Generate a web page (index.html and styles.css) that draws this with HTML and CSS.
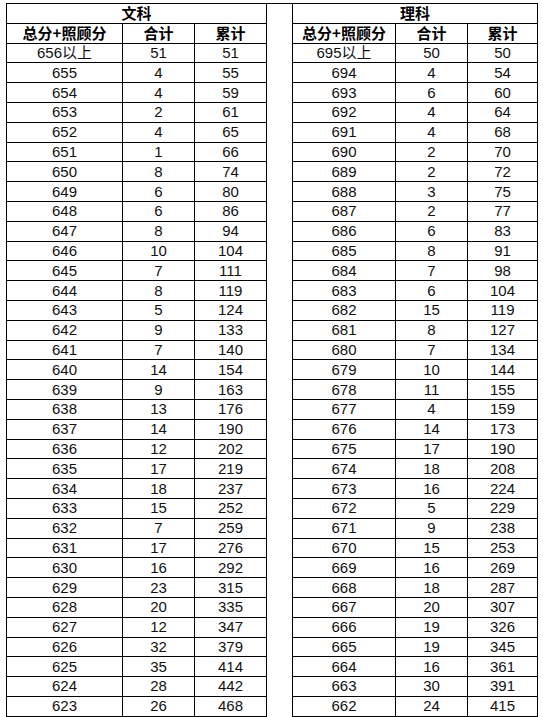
FILE: index.html
```html
<!DOCTYPE html>
<html lang="zh">
<head>
<meta charset="utf-8">
<title>分数段统计</title>
<link rel="stylesheet" href="styles.css">
</head>
<body>
<table class="score">
<colgroup>
<col class="c-score-l"><col class="c-num"><col class="c-num">
<col class="c-gap">
<col class="c-score-r"><col class="c-num"><col class="c-num-r">
</colgroup>
<tbody>
<tr class="head"><th colspan="3">文科</th><td class="gap" rowspan="37"></td><th colspan="3">理科</th></tr>
<tr class="head"><th>总分+照顾分</th><th>合计</th><th>累计</th><th>总分+照顾分</th><th>合计</th><th>累计</th></tr>
<tr><td>656以上</td><td>51</td><td>51</td><td>695以上</td><td>50</td><td>50</td></tr>
<tr><td>655</td><td>4</td><td>55</td><td>694</td><td>4</td><td>54</td></tr>
<tr><td>654</td><td>4</td><td>59</td><td>693</td><td>6</td><td>60</td></tr>
<tr><td>653</td><td>2</td><td>61</td><td>692</td><td>4</td><td>64</td></tr>
<tr><td>652</td><td>4</td><td>65</td><td>691</td><td>4</td><td>68</td></tr>
<tr><td>651</td><td>1</td><td>66</td><td>690</td><td>2</td><td>70</td></tr>
<tr><td>650</td><td>8</td><td>74</td><td>689</td><td>2</td><td>72</td></tr>
<tr><td>649</td><td>6</td><td>80</td><td>688</td><td>3</td><td>75</td></tr>
<tr><td>648</td><td>6</td><td>86</td><td>687</td><td>2</td><td>77</td></tr>
<tr><td>647</td><td>8</td><td>94</td><td>686</td><td>6</td><td>83</td></tr>
<tr><td>646</td><td>10</td><td>104</td><td>685</td><td>8</td><td>91</td></tr>
<tr><td>645</td><td>7</td><td>111</td><td>684</td><td>7</td><td>98</td></tr>
<tr><td>644</td><td>8</td><td>119</td><td>683</td><td>6</td><td>104</td></tr>
<tr><td>643</td><td>5</td><td>124</td><td>682</td><td>15</td><td>119</td></tr>
<tr><td>642</td><td>9</td><td>133</td><td>681</td><td>8</td><td>127</td></tr>
<tr><td>641</td><td>7</td><td>140</td><td>680</td><td>7</td><td>134</td></tr>
<tr><td>640</td><td>14</td><td>154</td><td>679</td><td>10</td><td>144</td></tr>
<tr><td>639</td><td>9</td><td>163</td><td>678</td><td>11</td><td>155</td></tr>
<tr><td>638</td><td>13</td><td>176</td><td>677</td><td>4</td><td>159</td></tr>
<tr><td>637</td><td>14</td><td>190</td><td>676</td><td>14</td><td>173</td></tr>
<tr><td>636</td><td>12</td><td>202</td><td>675</td><td>17</td><td>190</td></tr>
<tr><td>635</td><td>17</td><td>219</td><td>674</td><td>18</td><td>208</td></tr>
<tr><td>634</td><td>18</td><td>237</td><td>673</td><td>16</td><td>224</td></tr>
<tr><td>633</td><td>15</td><td>252</td><td>672</td><td>5</td><td>229</td></tr>
<tr><td>632</td><td>7</td><td>259</td><td>671</td><td>9</td><td>238</td></tr>
<tr><td>631</td><td>17</td><td>276</td><td>670</td><td>15</td><td>253</td></tr>
<tr><td>630</td><td>16</td><td>292</td><td>669</td><td>16</td><td>269</td></tr>
<tr><td>629</td><td>23</td><td>315</td><td>668</td><td>18</td><td>287</td></tr>
<tr><td>628</td><td>20</td><td>335</td><td>667</td><td>20</td><td>307</td></tr>
<tr><td>627</td><td>12</td><td>347</td><td>666</td><td>19</td><td>326</td></tr>
<tr><td>626</td><td>32</td><td>379</td><td>665</td><td>19</td><td>345</td></tr>
<tr><td>625</td><td>35</td><td>414</td><td>664</td><td>16</td><td>361</td></tr>
<tr><td>624</td><td>28</td><td>442</td><td>663</td><td>30</td><td>391</td></tr>
<tr><td>623</td><td>26</td><td>468</td><td>662</td><td>24</td><td>415</td></tr>
<tr><td></td><td></td><td></td><td></td><td></td><td></td></tr>
</tbody>
</table>
</body>
</html>
```
FILE: styles.css
```css
html, body {
  margin: 0;
  padding: 0;
  background: #ffffff;
}
body {
  padding: 3px 0 0 6px;
  overflow: hidden;
  height: 717px;
  box-sizing: border-box;
}
.score {
  border-collapse: collapse;
  table-layout: fixed;
  width: 531px;
  font-family: "Liberation Sans", "Noto Sans CJK SC", Arial, sans-serif;
  font-size: 15px;
  color: #111;
}
.c-score-l { width: 116px; }
.c-num { width: 72px; }
.c-gap { width: 26px; }
.c-score-r { width: 103px; }
.c-num-r { width: 70px; }
.score tr {
  height: 19.8px;
}
.score th,
.score td {
  border: 1px solid #000;
  padding: 0;
  text-align: center;
  vertical-align: middle;
  line-height: 16px;
  white-space: nowrap;
  overflow: hidden;
}
.score th {
  font-family: "Noto Sans CJK SC", sans-serif;
  font-weight: bold;
  font-size: 15px;
  color: #000;
}
.score td.gap {
  border-top: 1px solid #000;
}
```
